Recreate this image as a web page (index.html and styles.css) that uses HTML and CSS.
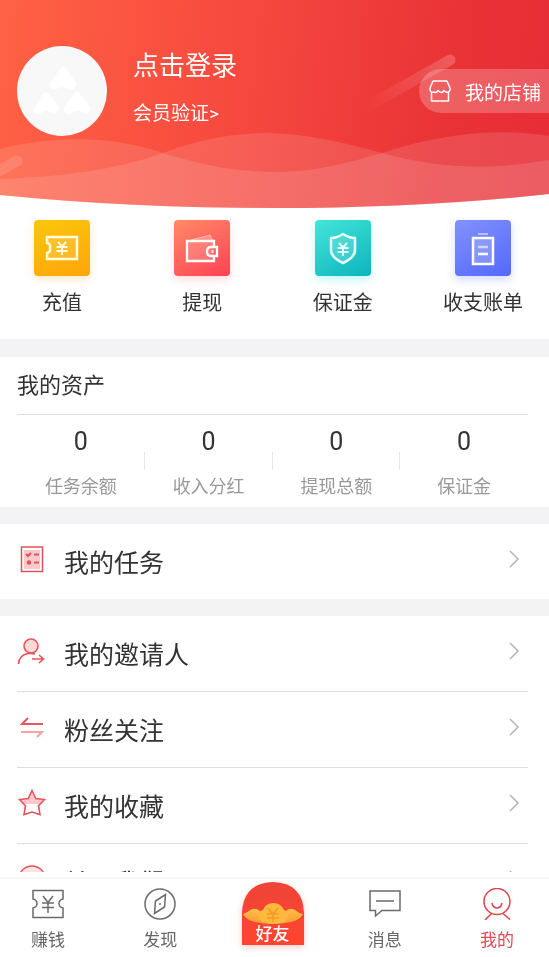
FILE: index.html
```html
<!DOCTYPE html>
<html lang="zh-CN">
<head>
<meta charset="utf-8">
<meta name="viewport" content="width=device-width, initial-scale=1">
<title>我的</title>
<link rel="stylesheet" href="styles.css">
</head>
<body>
<main class="content">
  <header class="hero">
    <svg class="hero-bg" viewBox="0 0 549 208" preserveAspectRatio="none" aria-hidden="true">
      <defs>
        <linearGradient id="heroFill" x1="0" y1="0" x2="1" y2="0.04">
          <stop offset="0" stop-color="#ff6244"/>
          <stop offset="0.5" stop-color="#f5463e"/>
          <stop offset="0.85" stop-color="#e93236"/>
          <stop offset="1" stop-color="#e72e36"/>
        </linearGradient>
        <linearGradient id="streak" gradientUnits="userSpaceOnUse" x1="368" y1="106" x2="455" y2="60">
          <stop offset="0" stop-color="#fff" stop-opacity="0"/>
          <stop offset="1" stop-color="#fff" stop-opacity="0.2"/>
        </linearGradient>
        <clipPath id="heroClip"><path d="M0 0H549V194Q420 208 275 208Q130 208 0 195Z"/></clipPath>
      </defs>
      <g clip-path="url(#heroClip)">
        <rect width="549" height="208" fill="url(#heroFill)"/>
        <path d="M0 149C50 136 110 135 163 153C210 168 245 172 280 172C320 171 350 162 382 153C430 137 490 126 549 136V208H0Z" fill="#fff" fill-opacity="0.12"/>
        <path d="M0 179C60 177 115 170 163 153C205 137 240 133 270 133C310 134 345 143 382 153C440 169 490 170 549 160V208H0Z" fill="#fff" fill-opacity="0.12"/>
        <path d="M370 105L450 60" stroke="url(#streak)" stroke-width="11" stroke-linecap="round"/>
        <path d="M-10 176L17 161" stroke="#fff" stroke-opacity="0.12" stroke-width="11" stroke-linecap="round"/>
      </g>
    </svg>
    <div class="avatar">
      <svg viewBox="0 0 90 90" width="90" height="90" aria-hidden="true">
        <g fill="#fff" stroke="#fff" stroke-width="6" stroke-linejoin="round">
          <path d="M46 24L56 38Q56 41 53 40L46 37L39 40Q35 41 36 38Z"/>
          <path d="M29 49L39 62Q39 65 36 64L29 61L22 65Q19 66 20 63Z"/>
          <path d="M60 49L70 62Q71 65 68 64L60 61L52 65Q49 65 50 62Z"/>
        </g>
      </svg>
    </div>
    <div class="account">
      <a class="login" href="#login">点击登录</a>
      <a class="verify" href="#verify">会员验证&gt;</a>
    </div>
    <button class="shop" type="button">
      <svg viewBox="0 0 22 22" width="22" height="22" fill="none" stroke="#fff" stroke-width="1.5" stroke-linejoin="round" aria-hidden="true">
        <path d="M4 1H18L21 8V10Q20 13 17 12L15 10.500Q13 13.500 11 12L9 10.500Q7 13.500 5 12Q1 13 1 9V8Z"/>
        <path d="M2.500 12.500V21H19.500V12.500"/>
      </svg>
      <span>我的店铺</span>
    </button>
  </header>

  <nav class="shortcuts" aria-label="快捷入口">
    <a href="#recharge">
      <span class="tile tile-yellow">
        <svg viewBox="0 0 56 56" width="56" height="56" fill="none" stroke="#fffbe0" stroke-width="2.500" aria-hidden="true">
          <path d="M13 17H43V39H13V33Q16 32.500 16 30V26Q16 23.500 13 23Z" fill="#fff" fill-opacity="0.12"/>
          <path d="M24 22L28 26.500L32 22M22.500 27H33.500M22.500 31H33.500M28 26.500V35" stroke-width="2"/>
        </svg>
      </span>
      <span>充值</span>
    </a>
    <a href="#withdraw">
      <span class="tile tile-red">
        <svg viewBox="0 0 56 56" width="56" height="56" fill="none" stroke="#fff" stroke-width="2.300" aria-hidden="true">
          <path d="M17 20L36 15L39 21" fill="#fff" fill-opacity="0.25" stroke-opacity="0.4" stroke-width="1"/>
          <path d="M40 27V21H13V41H40V36" fill="#fff" fill-opacity="0.15"/>
          <path d="M43 27H37Q33 27 33 31.500Q33 36 37 36H43Z"/>
          <path d="M38.500 30V33" stroke-opacity="0.7"/>
        </svg>
      </span>
      <span>提现</span>
    </a>
    <a href="#deposit">
      <span class="tile tile-teal">
        <svg viewBox="0 0 56 56" width="56" height="56" fill="none" stroke="#e8ffff" stroke-width="2.500" stroke-linejoin="round" aria-hidden="true">
          <path d="M28 14Q34 18 40 18V31Q39 38 28 43Q17 38 16 31V18Q22 18 28 14Z" fill="#fff" fill-opacity="0.15"/>
          <path d="M24 23L28 27.500L32 23M22.500 28H33.500M22.500 32H33.500M28 27.500V36" stroke-width="2"/>
        </svg>
      </span>
      <span>保证金</span>
    </a>
    <a href="#bills">
      <span class="tile tile-blue">
        <svg viewBox="0 0 56 56" width="56" height="56" fill="none" stroke="#fff" stroke-width="2.500" aria-hidden="true">
          <path d="M23 14H33" stroke-opacity="0.5" stroke-width="2"/>
          <path d="M18 18H38V44H18Z" fill="#fff" fill-opacity="0.2"/>
          <path d="M23 27H33" stroke-opacity="0.6"/>
          <path d="M23 34H33"/>
        </svg>
      </span>
      <span>收支账单</span>
    </a>
  </nav>

  <section class="assets">
    <h2>我的资产</h2>
    <dl>
      <div><dt>任务余额</dt><dd>0</dd></div>
      <div><dt>收入分红</dt><dd>0</dd></div>
      <div><dt>提现总额</dt><dd>0</dd></div>
      <div><dt>保证金</dt><dd>0</dd></div>
    </dl>
  </section>

  <section class="menu">
    <a href="#tasks">
      <svg class="icon" viewBox="0 0 30 30" width="30" height="30" fill="none" stroke="#e0525a" stroke-width="1.500" aria-hidden="true">
        <path d="M7 6H23V25H7Z" fill="#ffc9cb" stroke="none"/>
        <path d="M4.500 3H25.500V27.500H4.500Z"/>
        <path d="M9 10L11 12L14 9M17 10.500H22M17 18.500H22" stroke-width="2"/>
        <circle cx="12" cy="18.500" r="1.500" fill="#e0525a"/>
      </svg>
      <span>我的任务</span>
      <svg class="chevron" viewBox="0 0 12 20" width="12" height="20" aria-hidden="true"><path d="M2 2L10 10L2 18"/></svg>
    </a>
  </section>

  <section class="menu">
    <a href="#inviter">
      <svg class="icon" viewBox="0 0 30 30" width="30" height="30" fill="none" stroke="#e8545a" stroke-width="1.600" aria-hidden="true">
        <circle cx="14" cy="10" r="7" fill="#ffd9da"/>
        <path d="M1.500 28Q2 19 11 17.500Q15 17 18 18M15 23H26M22 19L26.500 23L22 27"/>
      </svg>
      <span>我的邀请人</span>
      <svg class="chevron" viewBox="0 0 12 20" width="12" height="20" aria-hidden="true"><path d="M2 2L10 10L2 18"/></svg>
    </a>
    <a href="#fans">
      <svg class="icon" viewBox="0 0 30 30" width="30" height="30" fill="none" stroke="#ea5660" stroke-width="2" aria-hidden="true">
        <path d="M26 12H5L11 6"/>
        <path d="M4 20H25L20 25" stroke="#f6a3a8"/>
      </svg>
      <span>粉丝关注</span>
      <svg class="chevron" viewBox="0 0 12 20" width="12" height="20" aria-hidden="true"><path d="M2 2L10 10L2 18"/></svg>
    </a>
    <a href="#favorites">
      <svg class="icon" viewBox="0 0 30 30" width="30" height="30" fill="none" aria-hidden="true">
        <path d="M15 2L19 10.500L28 11.500L24 16H6L2 11.500L11 10.500Z" fill="#ffc9cb"/>
        <path d="M15 2.500L18.800 10.500L27.500 11.500L21.500 17.700L23 26.500L15 24L7 26.500L8.500 17.700L2.500 11.500L11.200 10.500Z" stroke="#e8545a" stroke-width="1.600"/>
      </svg>
      <span>我的收藏</span>
      <svg class="chevron" viewBox="0 0 12 20" width="12" height="20" aria-hidden="true"><path d="M2 2L10 10L2 18"/></svg>
    </a>
    <a href="#about">
      <svg class="icon" viewBox="0 0 30 30" width="30" height="30" fill="none" stroke="#e8545a" stroke-width="1.500" aria-hidden="true">
        <circle cx="15" cy="15" r="13" fill="#ffe3e4"/>
        <path d="M15 13V22M15 8V10"/>
      </svg>
      <span>关于我们</span>
      <svg class="chevron" viewBox="0 0 12 20" width="12" height="20" aria-hidden="true"><path d="M2 2L10 10L2 18"/></svg>
    </a>
  </section>
</main>

<nav class="tabs" aria-label="主导航">
  <a href="#earn">
    <svg viewBox="0 0 32 32" width="32" height="32" fill="none" stroke="#6b6b6b" stroke-width="1.500" aria-hidden="true">
      <path d="M1 2.500H31V11Q27 12 27 15.500Q27 19 31 20V29.500H1V20Q5 19 5 15.500Q5 12 1 11Z"/>
      <path d="M11 8L16 14.500L21 8M10 15H22M10 19.500H22M16 14.500V25"/>
    </svg>
    <span>赚钱</span>
  </a>
  <a href="#discover">
    <svg viewBox="0 0 32 32" width="32" height="32" fill="none" stroke="#6b6b6b" stroke-width="1.500" aria-hidden="true">
      <circle cx="16" cy="16" r="15"/>
      <path d="M21.500 6.500L20.500 19L10.500 25.500L11.500 13Z"/>
      <circle cx="16" cy="16" r="1" fill="#6b6b6b" stroke="none"/>
    </svg>
    <span>发现</span>
  </a>
  <a class="friends" href="#friends">
    <svg viewBox="0 0 64 64" width="64" height="64" aria-hidden="true">
      <defs>
        <linearGradient id="packet" x1="0" y1="0" x2="0" y2="1">
          <stop offset="0" stop-color="#ee4438"/>
          <stop offset="1" stop-color="#ff452f"/>
        </linearGradient>
        <linearGradient id="gold" x1="0" y1="0" x2="0" y2="1">
          <stop offset="0" stop-color="#ffc04a"/>
          <stop offset="1" stop-color="#ff9930"/>
        </linearGradient>
      </defs>
      <path d="M1 63V31Q2 1 32 0Q62 1 63 31V63Z" fill="url(#packet)"/>
      <path d="M2 32Q7 30 11 27Q16 26 19 29H45Q49 25 54 28Q57 31 62 32Q59 38 50 40Q32 44 14 40Q5 38 2 32Z" fill="url(#gold)"/>
      <path d="M17 35Q18 29 22 28Q25 21 32 21Q40 21 43 28Q47 29 48 35Q44 42 32 42Q20 42 17 35Z" fill="#ffba3d"/>
      <path d="M27 26L32 32L37 26M26 32H38M26 36H38M32 32V40" fill="none" stroke="#f3982a" stroke-width="1.500"/>
    </svg>
    <span>好友</span>
  </a>
  <a href="#messages">
    <svg viewBox="0 0 32 32" width="32" height="32" fill="none" stroke="#6b6b6b" stroke-width="1.500" aria-hidden="true">
      <path d="M1 3H31V22.500H13L6.500 28V22.500H1Z"/>
      <path d="M7 13H25"/>
    </svg>
    <span>消息</span>
  </a>
  <a class="active" href="#me" aria-current="page">
    <svg viewBox="0 0 32 32" width="32" height="32" fill="none" stroke="#e14b50" stroke-width="1.600" aria-hidden="true">
      <circle cx="16" cy="13.500" r="13"/>
      <path d="M11 15Q12 20 16 20Q20 20 21 15M10.500 25.500L4 32M22 25.500L29 31.500"/>
    </svg>
    <span>我的</span>
  </a>
</nav>
</body>
</html>
```

FILE: styles.css
```css
* {
  box-sizing: border-box;
}

body {
  display: flex;
  flex-direction: column;
  height: 100vh;
  margin: 0;
  background: #fff;
  color: #333;
  font-family: Roboto, "Noto Sans CJK SC", sans-serif;
}

a {
  color: inherit;
  text-decoration: none;
}

svg {
  display: block;
  flex: none;
}

.content {
  flex: 1;
  min-height: 0;
  overflow-y: auto;
  scrollbar-width: none;
}

/* Header */

.hero {
  position: relative;
  display: flex;
  align-items: flex-start;
  height: 208px;
  padding: 46px 0 0 17px;
  color: #fff;
}

.hero-bg {
  position: absolute;
  inset: 0;
  z-index: -1;
  width: 100%;
  height: 100%;
}

.avatar {
  flex: none;
  border-radius: 50%;
  background: #f8f8f8;
  overflow: hidden;
}

.account {
  display: flex;
  flex-direction: column;
  gap: 14px;
  margin-left: 26px;
}

.login {
  font-size: 26px;
  line-height: 40px;
}

.verify {
  font-size: 19px;
  line-height: 28px;
}

.shop {
  display: flex;
  align-items: center;
  gap: 14px;
  height: 44px;
  margin: 23px 0 0 auto;
  padding: 0 8px 0 10px;
  border: 0;
  border-radius: 22px 0 0 22px;
  background: rgba(255, 255, 255, 0.22);
  color: #fff;
  font: inherit;
  font-size: 19px;
  white-space: nowrap;
}

/* Shortcuts */

.shortcuts {
  display: flex;
  justify-content: space-between;
  padding: 12px 26px 21px 22px;
}

.shortcuts a {
  display: flex;
  flex-direction: column;
  align-items: center;
  gap: 12px;
  width: 80px;
  font-size: 20px;
  line-height: 30px;
}

.tile {
  border-radius: 4px;
}

.tile-yellow {
  background: linear-gradient(160deg, #fbc60c, #ffa508);
  box-shadow: 0 4px 8px rgba(255, 170, 60, 0.25);
}

.tile-red {
  background: linear-gradient(150deg, #ff8a66, #ff4256);
  box-shadow: 0 4px 8px rgba(255, 80, 90, 0.2);
}

.tile-teal {
  background: linear-gradient(150deg, #44e6d8, #0cb4bd);
  box-shadow: 0 4px 8px rgba(20, 220, 220, 0.25);
}

.tile-blue {
  background: linear-gradient(150deg, #8391fb, #5269fd);
  box-shadow: 0 4px 8px rgba(90, 110, 255, 0.25);
}

/* Assets */

.assets {
  border-top: 18px solid #f3f3f6;
  padding: 0 21px 0 17px;
}

.assets h2 {
  margin: 0;
  border-bottom: 1px solid #dedede;
  font-size: 22px;
  font-weight: 400;
  line-height: 57px;
}

.assets dl {
  display: flex;
  margin: 0;
  padding: 10px 0 6px;
}

.assets dl div {
  display: flex;
  flex: 1;
  flex-direction: column-reverse;
  gap: 14px;
  align-items: center;
  background: linear-gradient(#e6e6e6, #e6e6e6) right 27px / 1px 18px no-repeat;
}

.assets dl div:last-child {
  background: none;
}

.assets dt {
  color: #999;
  font-size: 18px;
  line-height: 28px;
}

.assets dd {
  margin: 0;
  font-size: 25px;
  line-height: 34px;
}

/* Menu rows */

.menu {
  border-top: 17px solid #f3f3f6;
  padding: 0 21px 0 17px;
}

.menu a {
  display: flex;
  align-items: center;
  height: 76px;
  padding-bottom: 2px;
  border-bottom: 1px solid #dedede;
  font-size: 25px;
}

.menu a:last-child {
  height: 75px;
  border-bottom: 0;
}

.icon {
  margin: 0 17px 4px 0;
}

.chevron {
  margin: 0 8px 4px auto;
  fill: none;
  stroke: #b5b5b5;
  stroke-width: 1.5;
}

/* Tab bar */

.tabs {
  display: flex;
  flex: none;
  justify-content: space-between;
  height: 80px;
  margin-top: 5px;
  padding: 0 20px 0 16px;
  border-top: 2px solid #f8f8f8;
  color: #666;
  font-size: 17px;
  line-height: 24px;
}

.tabs a {
  display: flex;
  flex-direction: column;
  align-items: center;
  gap: 8px;
  width: 64px;
  padding-top: 9px;
}

.tabs .active {
  color: #e14b50;
}

.tabs .friends {
  display: grid;
  align-content: start;
  justify-items: center;
  padding-top: 3px;
  color: #fff;
  font-weight: 500;
}

.friends svg,
.friends span {
  grid-area: 1 / 1;
}

.friends svg {
  filter: drop-shadow(0 2px 3px rgba(255, 80, 60, 0.3));
}

.friends span {
  z-index: 1;
  align-self: end;
}
```
